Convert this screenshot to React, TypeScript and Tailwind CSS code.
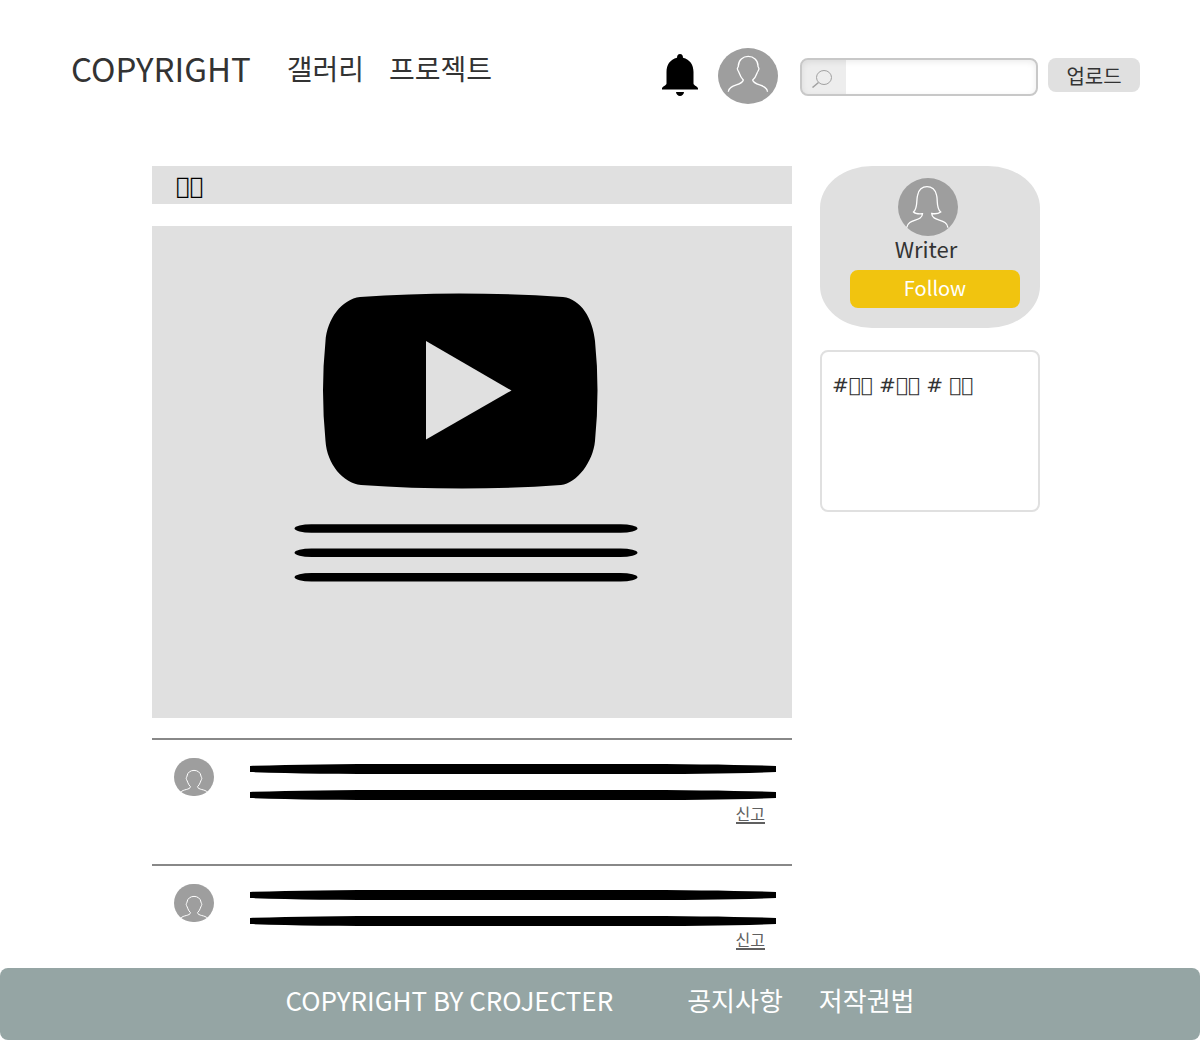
import React from "react";

function Bell() {
  return (
    <svg viewBox="0 0 36 42" className="h-[42px] w-9" aria-hidden="true">
      <path d="M18 0C16 0 15 1.500 15 3.800C8 5.500 4.500 11 4.500 18V29.500C4.500 31.500 0 32.500 0 34.500V35.500H36V34.500C36 32.500 31.500 31.500 31.500 29.500V18C31.500 11 28 5.500 21 3.800C21 1.500 20 0 18 0ZM14 38H22C22 40 20 42 18 42S14 40 14 38Z" />
    </svg>
  );
}

function Lines() {
  return (
    <svg viewBox="0 0 526 36" preserveAspectRatio="none" className="h-9 w-full" aria-hidden="true">
      <path d="M0 2C40 .6 90 0 150 0H376C436 0 486 .6 526 2V8C486 9.400 436 10 376 10H150C90 10 40 9.400 0 8Z" />
      <path d="M0 28C40 26.600 90 26 150 26H376C436 26 486 26.600 526 28V34C486 35.400 436 36 376 36H150C90 36 40 35.400 0 34Z" />
    </svg>
  );
}

function Comment() {
  return (
    <article className="flex border-t-2 border-[#888] pt-[18px] pr-4 pb-10 pl-[22px] last:pb-[18px]">
      <svg viewBox="0 0 40 38" className="mr-9 h-[38px] w-10 shrink-0" aria-hidden="true">
        <rect width="40" height="38" rx="19" ry="19" fill="#9e9e9e" />
        <path d="M6.700 34.300C9 31 16 32 16.500 28.700C14 26.500 13.500 23 12.500 21.500C11.500 19.500 13 19.500 13 18C14 10.500 26 10.500 27 18C27 19.500 28.500 19.500 27.500 21.500C26.500 23 26 26.500 23.500 28.700C24 32 31 31 33.500 34.300" fill="none" stroke="#fff" />
      </svg>
      <div className="flex min-w-0 flex-1 flex-col items-end pt-1.5">
        <Lines />
        <a href="#report" className="mt-1 mr-[11px] border-b-2 border-[#606060] text-base leading-[18px] text-[#606060]">신고</a>
      </div>
    </article>
  );
}

export default function App() {
  return (
    <div className="flex min-h-screen flex-col bg-white font-['Noto_Sans_CJK_KR',sans-serif] text-[#333]">
      <header className="flex h-[166px] items-start pt-12 pr-[60px] pl-[71px]">
        <a href="#home" className="mr-9 text-[33px] leading-10">COPYRIGHT</a>
        <nav className="flex gap-[25px] text-[28px] leading-10">
          <a href="#gallery">갤러리</a>
          <a href="#project">프로젝트</a>
        </nav>
        <button aria-label="알림" className="mt-1.5 mr-5 ml-auto text-black"><Bell /></button>
        <button aria-label="프로필" className="mr-[22px]">
          <svg viewBox="0 0 60 56" className="h-14 w-[60px]" aria-hidden="true">
            <ellipse cx="30" cy="28" rx="30" ry="28" fill="#9e9e9e" />
            <path d="M10.300 43.700C11 36 24 38 25.300 32C22 29 21 24 20.500 23.500C19 21 19 20.500 20.300 18.500C20 5 40.500 5 40 18.500C41.300 20.500 41.300 21 39.800 23.500C39 24 38.500 29 34.700 32C36 38 49 36 49.500 43.700" fill="none" stroke="#fff" strokeWidth="1.300" />
          </svg>
        </button>
        <label className="mt-2.5 mr-2.5 flex h-[38px] w-[238px] overflow-hidden rounded-lg border-2 border-[#c8c8c8] shadow-[inset_0_2px_6px_rgba(0,0,0,0.08)]">
          <span className="flex w-11 items-end bg-black/7 pb-1.5 pl-2.5">
            <svg viewBox="0 0 20 18" className="h-[18px] w-5" fill="none" stroke="#a0a0a0" aria-hidden="true">
              <ellipse cx="12" cy="7.500" rx="7.500" ry="7" />
              <path d="M6.500 12.500L.5 17.500" strokeWidth="1.500" />
            </svg>
          </span>
          <input type="search" aria-label="검색" className="min-w-0 flex-1 bg-transparent px-2 outline-none" />
        </label>
        <button className="mt-2.5 h-[34px] w-[92px] rounded-lg bg-[#e0e0e0] pt-0.5 text-xl leading-8">업로드</button>
      </header>

      <div className="flex flex-1 items-start gap-7 pr-40 pl-[152px]">
        <main className="min-w-0 flex-1">
          <h1 className="h-[38px] bg-[#e0e0e0] pl-6 font-['DejaVu_Sans'] text-[23px] leading-10 text-black">{"\uE000\uE000"}</h1>
          <svg viewBox="0 0 640 492" className="mt-[22px] mb-5 w-full bg-[#e0e0e0]" role="img" aria-label="동영상">
            <path d="M208 71Q305 64 411 71C429 73 441 93 443 115Q448 164 443 215C441 236 425 257 409 259Q311 266 209 259C191 257 175 238 173.500 215Q168.500 164 173.500 115C175 93 190 73 208 71Z" />
            <path d="M274 115L359.500 164.500L274 213.500Z" fill="#e0e0e0" />
            <rect x="142.500" y="298.300" width="343" height="8.400" rx="17" ry="4.200" />
            <rect x="142.500" y="322.600" width="343" height="8.400" rx="17" ry="4.200" />
            <rect x="142.500" y="347" width="343" height="8.400" rx="17" ry="4.200" />
          </svg>
          <section>
            <Comment />
            <Comment />
          </section>
        </main>
        <aside className="w-[220px] shrink-0">
          <section className="flex h-[162px] flex-col items-center rounded-[52px/42px] bg-[#e0e0e0] pt-3 pr-1">
            <svg viewBox="0 0 60 58" className="h-[58px] w-[60px] shrink-0" aria-hidden="true">
              <ellipse cx="30" cy="29" rx="30" ry="29" fill="#9e9e9e" />
              <path d="M8.700 49.700C10 40 24 44 24.500 35.700C21 36 17 35.500 15.500 34C20 30 18 24 19.500 17.700C21 5.500 37 5.500 38.700 17.700C40 24 38 30 42.700 34C40 36 37 36 33.700 35.500C34 44 49 40 50 49.700" fill="none" stroke="#fff" strokeWidth="1.300" />
            </svg>
            <h2 className="mr-1 text-[22px] leading-6">Writer</h2>
            <button className="mt-2.5 ml-3.5 h-[38px] w-[170px] rounded-lg bg-[#f1c40f] pb-0.5 text-xl leading-9 text-white">Follow</button>
          </section>
          <p className="mt-[22px] h-[162px] rounded-lg border-2 border-[#e0e0e0] px-2.5 py-5 font-['DejaVu_Sans'] text-xl leading-[26px]">{"#\uE000\uE000 #\uE000\uE000 # \uE000\uE000"}</p>
        </aside>
      </div>

      <footer className="flex h-[72px] justify-center rounded-lg bg-[#95a5a4] pt-3 text-[26px] leading-10 text-white">
        <span className="mr-[74px]">COPYRIGHT BY CROJECTER</span>
        <nav className="flex gap-9">
          <a href="#notice">공지사항</a>
          <a href="#copyright">저작권법</a>
        </nav>
      </footer>
    </div>
  );
}
